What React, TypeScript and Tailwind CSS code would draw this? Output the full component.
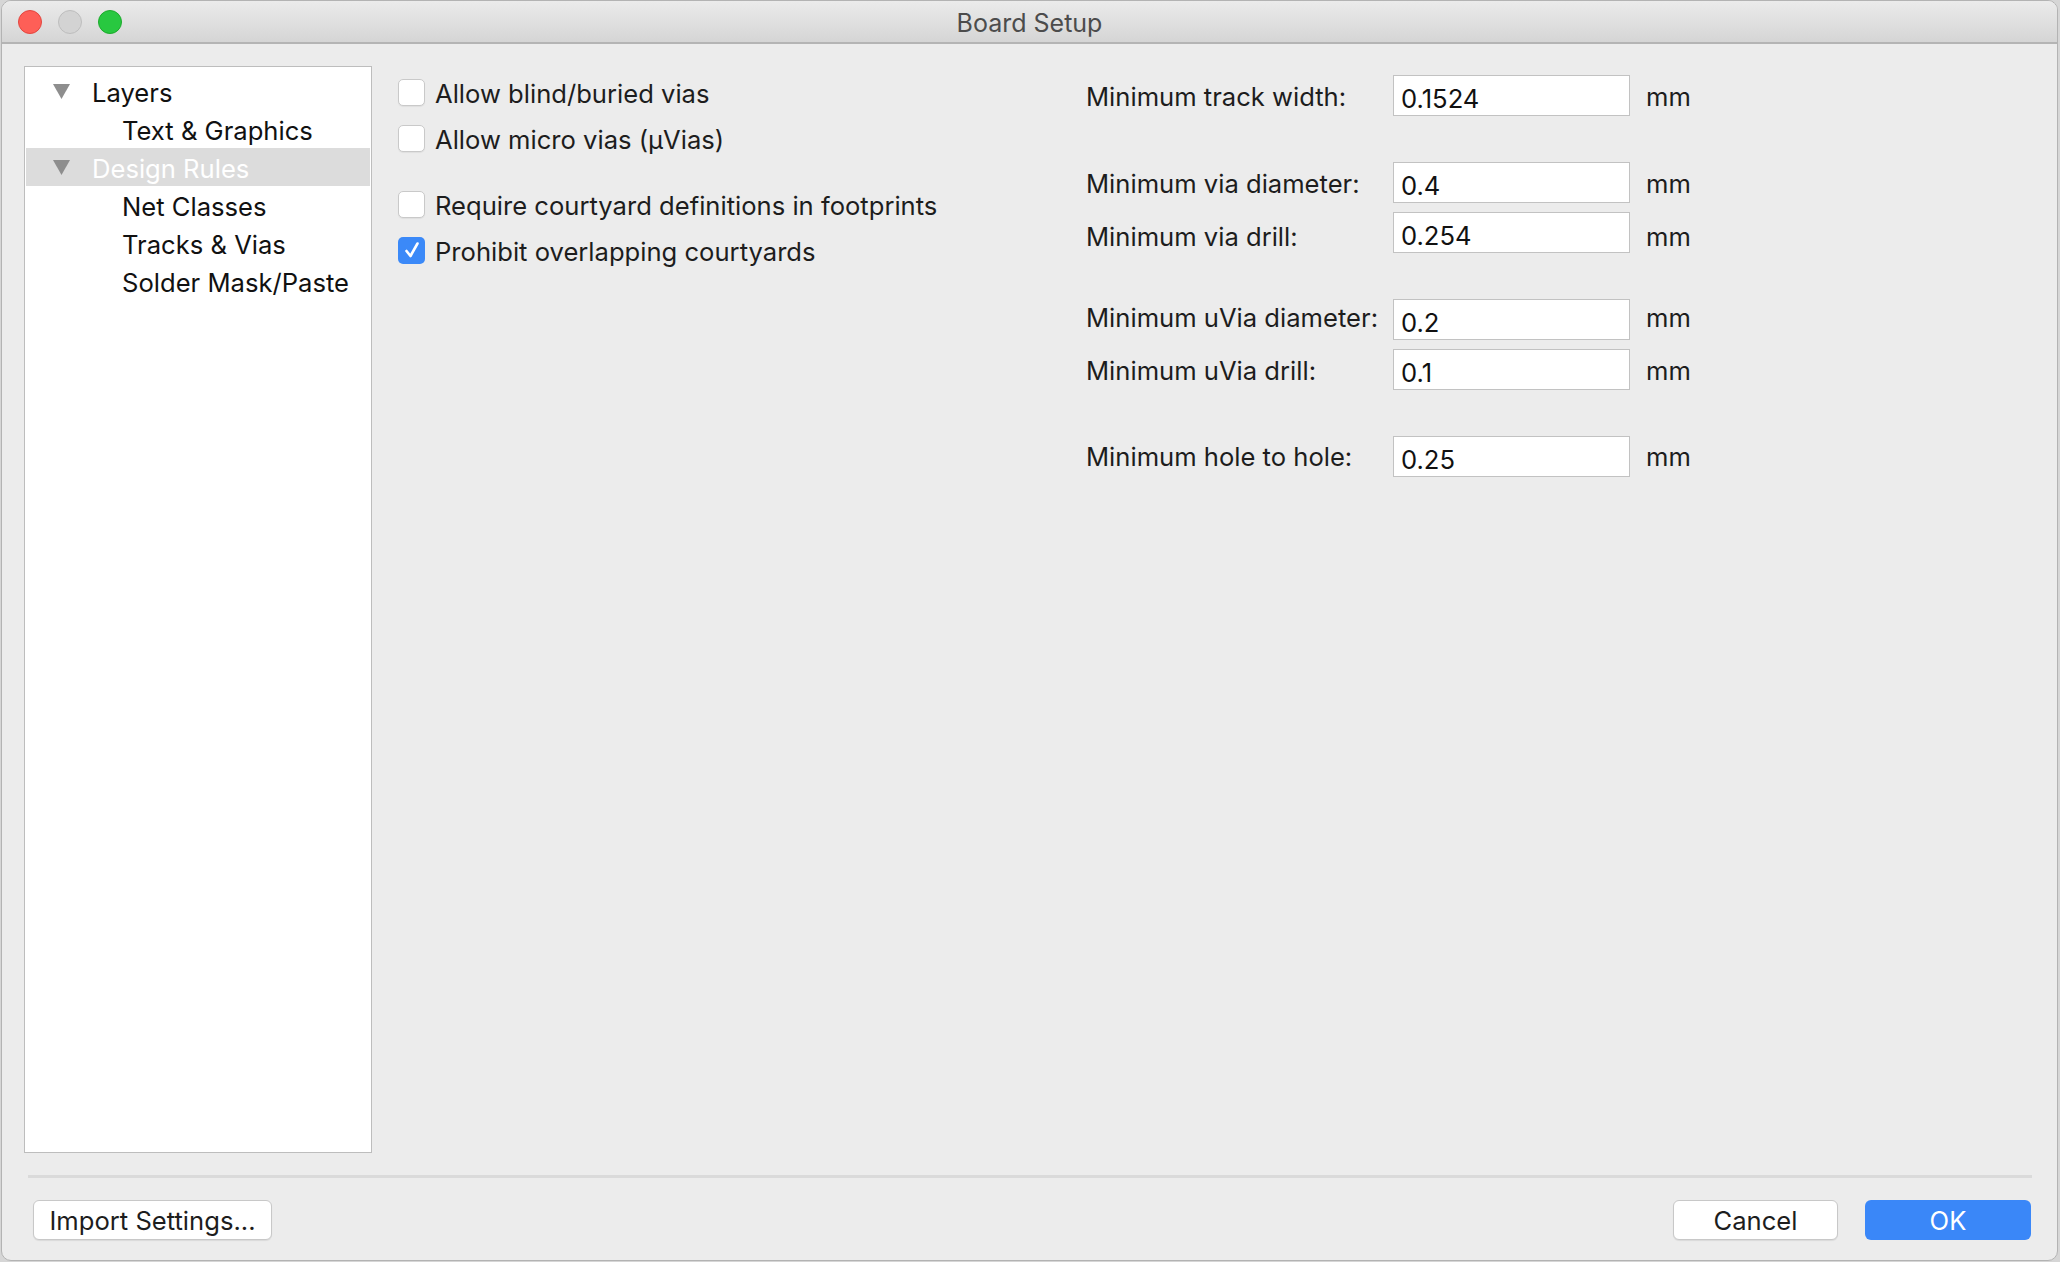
import React from 'react';

const font = { fontFamily: 'Inter, "Liberation Sans", Arial, sans-serif' };

function Triangle() {
    return (
        <svg width="17" height="15" viewBox="0 0 17 15" className="shrink-0">
            <path d="M0 0 L17 0 L8.5 15 Z" fill="#8e8e8e" />
        </svg>
    );
}

function TreeRow({ label, level, expanded, selected }: { label: string; level: number; expanded?: boolean; selected?: boolean }) {
    return (
        <div className={`h-[38px] flex items-center ${selected ? 'bg-[#dcdcdc] text-white' : 'text-[#111]'}`}>
            <div className="w-[66px] flex justify-center pl-[4px]">{expanded && <Triangle />}</div>
            <span className={`pt-[3px] ${level === 1 ? 'pl-[30px]' : 'pl-0'}`}>{label}</span>
        </div>
    );
}

function Checkbox({ label, checked }: { label: string; checked?: boolean }) {
    return (
        <div className="h-[46px] flex items-center gap-[10px]">
            {checked ? (
                <div className="w-[27px] h-[27px] rounded-[5px] bg-[#3b89f8] flex items-center justify-center">
                    <svg width="16" height="18" viewBox="0 0 16 18">
                        <path d="M2.5 10 L6.5 15 L13.5 2.5" fill="none" stroke="white" strokeWidth="2.6" strokeLinecap="round" strokeLinejoin="round" />
                    </svg>
                </div>
            ) : (
                <div className="w-[27px] h-[27px] rounded-[5px] bg-white border border-[#c9c9c9] shadow-[0_1px_1px_rgba(0,0,0,0.06)]" />
            )}
            <span className="text-[#1d1d1d] pt-[3px]">{label}</span>
        </div>
    );
}

function Field({ label, value, className = '', labelClass = 'pt-[4px]' }: { label: string; value: string; className?: string; labelClass?: string }) {
    return (
        <div className={`flex items-center h-[41px] ${className}`}>
            <div className={`w-[307px] text-[#1d1d1d] ${labelClass}`}>{label}</div>
            <div className="w-[237px] h-[41px] bg-white border border-[#c2c2c2] flex items-center px-[7px] pt-[6px] text-[#111]">
                {value}
            </div>
            <div className={`pl-[16px] text-[#1d1d1d] ${labelClass}`}>mm</div>
        </div>
    );
}

export default function App() {
    return (
        <div className="w-[2060px] h-[1262px] bg-[#d6d6d6] pl-px pr-[2px] pb-[1px] text-[25.6px] leading-none" style={font}>
            <div className="h-full flex flex-col border border-[#b3b3b3] rounded-[10px] overflow-hidden bg-[#ececec]">
                {/* Title bar */}
                <div className="h-[43px] shrink-0 grid grid-cols-[1fr_auto_1fr] items-center bg-gradient-to-b from-[#ebebeb] to-[#d5d5d5] border-b-2 border-[#b4b4b4]">
                    <div className="flex items-center gap-[16px] pl-[16px]">
                        <div className="w-[24px] h-[24px] rounded-full bg-[#fe5f57] border border-[#e2463f]" />
                        <div className="w-[24px] h-[24px] rounded-full bg-[#d3d3d3] border border-[#bdbdbd]" />
                        <div className="w-[24px] h-[24px] rounded-full bg-[#28c840] border border-[#1daa2c]" />
                    </div>
                    <div className="text-[#4c4c4c] text-[25px] pt-[3px]">Board Setup</div>
                    <div />
                </div>

                {/* Body */}
                <div className="flex-1 flex flex-col pt-[22px]">
                    <div className="flex pl-[22px] h-[1087px]">
                        <div className="w-[348px] h-full bg-white border border-[#bdbdbd] pt-[5px] px-px">
                            <TreeRow label="Layers" level={0} expanded />
                            <TreeRow label="Text & Graphics" level={1} />
                            <TreeRow label="Design Rules" level={0} expanded selected />
                            <TreeRow label="Net Classes" level={1} />
                            <TreeRow label="Tracks & Vias" level={1} />
                            <TreeRow label="Solder Mask/Paste" level={1} />
                        </div>

                        <div className="w-[714px] pl-[26px] pt-[3px]">
                            <Checkbox label="Allow blind/buried vias" />
                            <Checkbox label="Allow micro vias (µVias)" />
                            <div className="h-[20px]" />
                            <Checkbox label="Require courtyard definitions in footprints" />
                            <Checkbox label="Prohibit overlapping courtyards" checked />
                        </div>

                        <div className="pt-[9px]">
                            <Field label="Minimum track width:" value="0.1524" labelClass="pt-[3px]" />
                            <Field label="Minimum via diameter:" value="0.4" className="mt-[46px]" labelClass="pt-[2px]" />
                            <Field label="Minimum via drill:" value="0.254" className="mt-[9px]" labelClass="pt-[9px]" />
                            <Field label="Minimum uVia diameter:" value="0.2" className="mt-[46px]" labelClass="pb-[3px]" />
                            <Field label="Minimum uVia drill:" value="0.1" className="mt-[9px]" labelClass="pt-[2px]" />
                            <Field label="Minimum hole to hole:" value="0.25" className="mt-[46px]" labelClass="pt-[1px]" />
                        </div>
                    </div>

                    <div className="mt-[22px] ml-[26px] mr-[25px] h-[3px] bg-[#dadada]" />

                    <div className="flex items-center mt-[22px] pl-[31px] pr-[26px]">
                        <button className="w-[239px] h-[40px] bg-white border border-[#c8c8c8] rounded-[6px] text-[#1d1d1d] pt-px shadow-[0_1px_1px_rgba(0,0,0,0.08)]">
                            Import Settings...
                        </button>
                        <div className="flex-1" />
                        <button className="w-[165px] h-[40px] bg-white border border-[#c8c8c8] rounded-[6px] text-[#1d1d1d] pt-px shadow-[0_1px_1px_rgba(0,0,0,0.08)]">
                            Cancel
                        </button>
                        <button className="ml-[27px] w-[166px] h-[40px] bg-[#3a87f8] rounded-[6px] text-white pt-px">
                            OK
                        </button>
                    </div>
                </div>
            </div>
        </div>
    );
}
